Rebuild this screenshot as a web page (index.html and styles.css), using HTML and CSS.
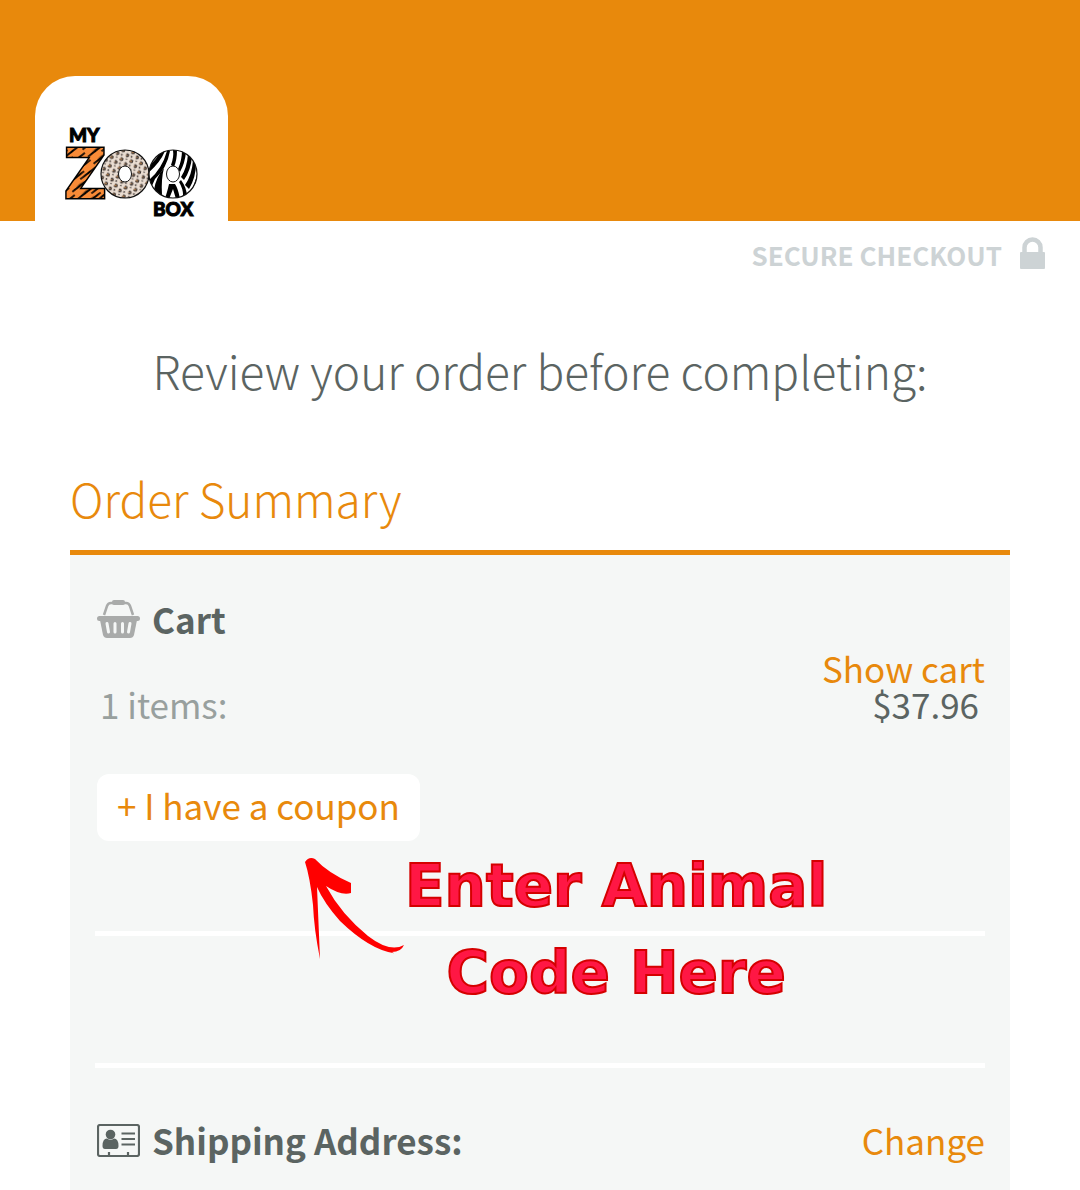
FILE: index.html
```html
<!DOCTYPE html>
<html lang="en">
<head>
  <meta charset="UTF-8" />
  <meta name="viewport" content="width=device-width, initial-scale=1.0" />
  <title>Secure Checkout - My Zoo Box</title>
  <link rel="stylesheet" href="styles.css">
</head>

<body>
  <header class="site-header">
    <a class="logo" href="#" aria-label="My Zoo Box">
      <svg width="136" height="94" viewBox="0 0 136 94" aria-hidden="true">
        <defs>
          <pattern id="tiger" width="34" height="9" patternUnits="userSpaceOnUse" patternTransform="rotate(-38)">
            <rect width="34" height="9" fill="#f98b37" />
            <path d="M0 3 Q10 1 22 3 Q10 4 0 3 M14 7 Q26 6 34 7 Q26 8 14 7" fill="#000" stroke="#000" stroke-width="1" />
          </pattern>
          <pattern id="leopard" width="10" height="9" patternUnits="userSpaceOnUse" patternTransform="rotate(12)">
            <rect width="10" height="9" fill="#eaddd2" />
            <circle cx="3" cy="2.5" r="1.5" fill="#b07a48" stroke="#3b3534" stroke-width="1.2" stroke-dasharray="4 1.5" />
            <circle cx="8" cy="6.5" r="1.3" fill="#9a7350" stroke="#3b3534" stroke-width="1.2" stroke-dasharray="3 1.5" />
            <circle cx="8" cy="1.5" r="0.8" fill="#4b4340" />
            <circle cx="2.5" cy="7" r="0.9" fill="#4b4340" />
          </pattern>
          <clipPath id="zebra-clip"><circle cx="109" cy="48" r="24" /></clipPath>
        </defs>
        <text class="logo-small" x="5" y="16">MY</text>
        <text class="logo-z" x="1" y="72" fill="url(#tiger)">Z</text>
        <circle cx="61" cy="48" r="24" fill="url(#leopard)" stroke="#111" stroke-width="1.2" />
        <ellipse cx="61" cy="48" rx="6.5" ry="8" fill="#fff" stroke="#111" />
        <circle cx="109" cy="48" r="24" fill="#fff" />
        <g clip-path="url(#zebra-clip)" fill="#000">
          <path d="M84 40 Q93 34 96 25 L101 25 Q96 37 84 47Z" />
          <path d="M85 54 Q98 43 103 25 L106 25 Q103 42 91 53 L87 62Z" />
          <path d="M90 64 Q92 51 100 42 Q97 53 98 69 L93 70Z" />
          <path d="M107 39 Q110 31 109 24 L113 24 Q113 34 110 41Z" />
          <path d="M114 43 Q118 34 118 24 L122 26 Q121 37 116 46Z" />
          <path d="M117 51 Q123 42 124 28 L128 30 Q127 44 120 54Z" />
          <path d="M121 59 Q128 49 129 34 L132 38 Q132 51 125 63Z" />
          <path d="M115 56 Q120 64 119 73 L123 71 Q123 62 117 54Z" />
          <path d="M105 58 Q103 67 101 72 L105 73 L109 63 L112 73 L116 73 Q114 62 111 58Z" />
          <path d="M126 66 Q131 58 133 48 L134 55 Q131 65 126 69Z" />
        </g>
        <circle cx="109" cy="48" r="24" fill="none" stroke="#111" stroke-width="1.2" />
        <ellipse cx="109" cy="48" rx="6.5" ry="8" fill="#fff" stroke="#111" />
        <text class="logo-small" x="89" y="90">BOX</text>
      </svg>
    </a>
  </header>

  <div class="secure">
    <span>SECURE CHECKOUT</span>
    <svg width="25" height="32" viewBox="0 0 25 32" aria-hidden="true">
      <path d="M4.500 16V10.500a8 8 0 0 1 16 0V16" fill="none" stroke="#cdd3d5" stroke-width="4.500" />
      <rect y="15" width="25" height="17" rx="1" fill="#cdd3d5" />
    </svg>
  </div>

  <main>
    <h1>Review your order before completing:</h1>

    <section class="summary">
      <h2>Order Summary</h2>

      <div class="panel">
        <div class="cart">
          <h3>
            <svg width="43" height="38" viewBox="0 0 43 38" aria-hidden="true">
              <path d="M7 15 L10 6 Q11 3 14 3 H29 Q32 3 33 6 L36 15" fill="none" stroke="#a9abaa" stroke-width="2.500" />
              <rect x="15" y="0" width="13" height="5" rx="2" fill="#a9abaa" />
              <rect x="0" y="16" width="43" height="5" rx="2.500" fill="#a9abaa" />
              <path d="M3 20 H40 L37 35 Q36 38 33 38 H10 Q7 38 6 35Z" fill="#a9abaa" />
              <path d="M10 23.500 L11.500 32 M18 23.500 V32 M25.500 23.500 V32 M33 23.500 L31.500 32" stroke="#f5f7f6" stroke-width="3" stroke-linecap="round" />
            </svg>
            Cart
          </h3>
          <a class="show-cart" href="#">Show cart</a>
          <div class="total">
            <span class="count">1 items:</span>
            <span>$37.96</span>
          </div>
          <button class="coupon" type="button">+ I have a coupon</button>
        </div>

        <div class="blank"></div>

        <div class="shipping">
          <h3>
            <svg width="43" height="33" viewBox="0 0 43 33" aria-hidden="true">
              <rect x="1" y="1" width="41" height="31" rx="2" fill="none" stroke="#5b6462" stroke-width="2.200" />
              <circle cx="13.500" cy="10.500" r="4.800" fill="#5b6462" />
              <path d="M5.500 22 Q5.500 14.500 10 14.500 Q13.500 17 17 14.500 Q21.500 14.500 21.500 22 Q21.500 25 19 25 H8 Q5.500 25 5.500 22Z" fill="#5b6462" />
              <path d="M24.500 9.500 H38 M24.500 15 H38 M24.500 20.500 H38" stroke="#5b6462" stroke-width="2.200" />
              <path d="M12 28 V32 M31 28 V32" stroke="#5b6462" stroke-width="2.200" />
            </svg>
            Shipping Address:
          </h3>
          <a href="#">Change</a>
        </div>

        <!-- handwritten hint over the panel -->
        <div class="hint">
          <svg width="100" height="103" viewBox="0 0 100 103" aria-hidden="true">
            <path d="M0 5 Q4 -1 10 2 Q23 16 46 26 V36 Q36 39 21 29 Q36 57 63 79 Q85 96 99 88 Q96 95 87 95 Q91 97 88 96 Q64 92 35 64 Q19 46 12 30 L15 102 Q9 72 8 48 Q5 20 0 5Z" fill="#f00" />
          </svg>
          <p>Enter Animal<br>Code Here</p>
        </div>
      </div>
    </section>
  </main>
</body>
</html>
```
FILE: styles.css
```css
* {
  box-sizing: border-box;
}

body {
  margin: 0;
  background: #fff;
  color: #5b6462;
  font-family: "Noto Sans CJK SC", "Open Sans", sans-serif;
  font-size: 35px;
  line-height: 36px;
}

a {
  color: #e8890c;
  text-decoration: none;
}

h1,
h2,
h3,
p {
  margin: 0;
}

/* Orange bar with the logo tab */
.site-header {
  background: #e8890c;
  padding: 76px 35px 0;
}

.logo {
  display: flex;
  justify-content: center;
  width: 193px;
  height: 145px;
  padding-top: 50px;
  background: #fff;
  border-radius: 40px 40px 0 0;
}

.logo svg {
  overflow: visible;
}

.logo-small {
  font: 900 19px Lato, sans-serif;
  stroke: #000;
  stroke-width: 1px;
}

.logo-z {
  font: 700 70px "Open Sans", sans-serif;
  stroke: #000;
  stroke-width: 3px;
  paint-order: stroke;
}

.secure {
  display: flex;
  justify-content: flex-end;
  align-items: flex-start;
  gap: 18px;
  padding: 16px 35px 0;
  color: #cdd3d5;
  font-size: 26px;
  font-weight: 700;
}

h1 {
  margin-top: 65px;
  font-size: 46px;
  font-weight: 300;
  line-height: 64px;
  text-align: center;
}

.summary {
  margin: 64px 70px 0;
}

h2 {
  padding-bottom: 20px;
  border-bottom: 5px solid #e8890c;
  color: #e8890c;
  font-size: 46px;
  font-weight: 300;
  line-height: 64px;
}

.panel {
  position: relative;
  padding: 0 25px;
  background: #f5f7f6;
}

h3 {
  display: flex;
  align-items: center;
  gap: 12px;
  font-size: 35px;
  font-weight: 700;
}

.cart {
  padding: 45px 0 90px 2px;
  border-bottom: 5px solid #fff;
}

.show-cart {
  display: block;
  margin-top: 12px;
  text-align: right;
}

.total {
  display: flex;
  justify-content: space-between;
  padding: 0 6px 0 3px;
}

.count {
  color: #98a09e;
}

.coupon {
  display: block;
  margin-top: 52px;
  padding: 0 20px 6px;
  border: 0;
  border-radius: 12px;
  background: #fff;
  color: #e8890c;
  font: inherit;
  line-height: 61px;
}

.blank {
  height: 132px;
  border-bottom: 5px solid #fff;
}

.shipping {
  display: flex;
  justify-content: space-between;
  align-items: center;
  padding: 54px 0 32px 2px;
}

.hint {
  position: absolute;
  top: 302px;
  left: 235px;
  display: flex;
}

.hint p {
  margin-top: -14px;
  color: #ff1744;
  font-family: "DejaVu Sans", sans-serif;
  font-size: 58px;
  font-weight: 700;
  line-height: 87px;
  text-align: center;
  -webkit-text-stroke: 2px #d50000;
}
```
